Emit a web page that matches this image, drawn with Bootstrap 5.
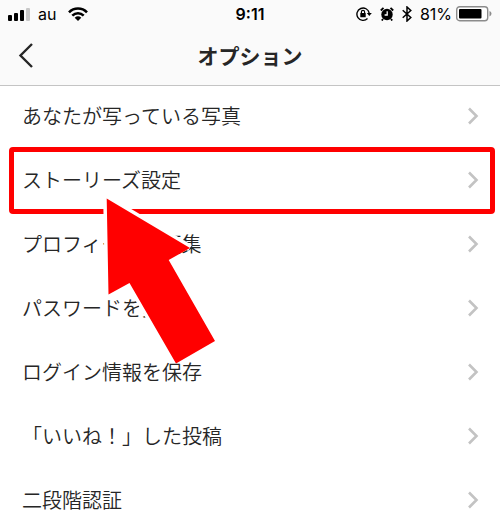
<!DOCTYPE html>
<html lang="ja">
<head>
<meta charset="utf-8">
<meta name="viewport" content="width=device-width, initial-scale=1">
<title>オプション</title>
<link href="https://cdn.jsdelivr.net/npm/bootstrap@5.3.0/dist/css/bootstrap.min.css" rel="stylesheet">
<style>
  body { font-family: "Noto Sans CJK JP", sans-serif; color: #262626; background: #fff; }
  .top-area { background: #fafafa; border-bottom: 1px solid #c4c4c4; }
  .status-bar { height: 28px; padding: 0 8px; font: 16px/28px Inter, sans-serif; color: #000; }
  .status-side { flex: 1 1 0; }
  .clock { font-weight: 600; }
  .title-bar { height: 57px; padding: 0 16px 4px; }
  .title-side { flex: 1 1 0; }
  .page-title { font-size: 21px; line-height: 28px; font-weight: 700; }
  .option-row { height: 64px; padding: 16px 20px 20px 22px; font-size: 20px; line-height: 28px; font-weight: 350; color: #262626; background: none; }
  .marked::before { content: ""; position: absolute; inset: -3px 5px 0 9px; border: 5px solid #f00; border-radius: 4px; pointer-events: none; }
  .pointer-arrow { position: absolute; left: 100px; top: 40px; z-index: 2; pointer-events: none; }
  svg { display: block; flex: none; }
</style>
<script src="https://cdn.jsdelivr.net/npm/bootstrap@5.3.0/dist/js/bootstrap.bundle.min.js"></script>
</head>
<body>
<div class="vh-100 overflow-hidden">
  <header class="top-area">
    <div class="status-bar d-flex align-items-center">
      <div class="status-side d-flex align-items-center">
        <svg width="22" height="14" viewBox="0 0 22 14" aria-hidden="true">
          <rect x="0" y="8" width="4" height="6" rx="1"/><rect x="6" y="6" width="4" height="8" rx="1"/><rect x="12" y="3" width="4" height="11" rx="1"/><rect x="18" y="1" width="4" height="13" rx="1" fill="#c8c8c8"/>
        </svg>
        <span class="ms-2 me-2 pe-1">au</span>
        <svg width="20" height="14" viewBox="0 0 20 14" fill="none" stroke="#000" stroke-width="2.600" aria-hidden="true">
          <path d="M1 5.300C6 .3 14 .3 19 5.300"/><path d="M4.300 8.600C7.600 5.400 12.400 5.400 15.700 8.600"/><path d="M10 14 6.700 10.700Q10 8 13.300 10.700Z" fill="#000" stroke="none"/>
        </svg>
      </div>
      <span class="clock">9:11</span>
      <div class="status-side d-flex align-items-center justify-content-end">
        <svg width="16" height="16" viewBox="0 0 16 16" fill="none" stroke="#000" stroke-width="1.400" aria-hidden="true">
          <path d="M11.500 12.600A6.200 6.200 0 1 1 13.200 7"/><path d="M10.800 7H15.800L13.300 10Z" fill="#000" stroke="none"/><rect x="4.300" y="7" width="5.400" height="4.200" rx=".5" fill="#000" stroke="none"/><path d="M5.400 7.500V6a1.600 1.600 0 0 1 3.200 0v1.500" stroke-width="1.200"/>
        </svg>
        <svg class="ms-2" width="14" height="14" viewBox="0 0 14 14" aria-hidden="true">
          <circle cx="7" cy="7.500" r="5.700"/><path d="M.8 3.500 3.500.9M13.200 3.500 10.500.9M3 12 1.800 13.500M11 12l1.200 1.500" stroke="#000" stroke-width="1.800"/><path d="M7.200 4.200V8H4.600" fill="none" stroke="#fff" stroke-width="1.300"/>
        </svg>
        <svg class="ms-2" width="10" height="16" viewBox="0 0 10 16" fill="none" stroke="#000" stroke-width="1.500" aria-hidden="true">
          <path d="M.7 4.300 8.800 11.500 5 15V1L8.800 4.500.7 11.700"/>
        </svg>
        <span class="ms-2">81%</span>
        <svg class="ms-1" width="36" height="16" viewBox="0 0 36 16" aria-hidden="true">
          <rect x=".7" y=".7" width="31" height="14" rx="3" fill="#fff" stroke="#8c8c8c" stroke-width="1.400"/><rect x="3" y="3" width="22.500" height="9.500" rx="1"/><path d="M33.500 5v5.500Q35.500 9.500 35.500 7.700T33.500 5Z" fill="#8c8c8c"/>
        </svg>
      </div>
    </div>
    <div class="title-bar d-flex align-items-center">
      <div class="title-side">
        <button type="button" class="btn border-0 p-0" aria-label="戻る">
          <svg width="20" height="26" viewBox="0 0 20 26" fill="none" stroke="#262626" stroke-width="2.400"><path d="M16 2 4.500 13.500 16 25"/></svg>
        </button>
      </div>
      <h1 class="page-title m-0">オプション</h1>
      <div class="title-side"></div>
    </div>
  </header>
  <nav aria-label="オプション">
    <a href="#" class="option-row d-flex align-items-center justify-content-between text-decoration-none">あなたが写っている写真<svg width="14" height="18" viewBox="0 0 14 18" fill="none" stroke="#c3c3c3" stroke-width="2.600"><path d="M3 1.500 10.500 9 3 16.500"/></svg></a>
    <div class="marked position-relative">
      <a href="#" class="option-row d-flex align-items-center justify-content-between text-decoration-none">ストーリーズ設定<svg width="14" height="18" viewBox="0 0 14 18" fill="none" stroke="#c3c3c3" stroke-width="2.600"><path d="M3 1.500 10.500 9 3 16.500"/></svg></a>
      <svg class="pointer-arrow" width="120" height="180" viewBox="0 0 120 180" aria-hidden="true">
        <path d="M8.500 104.500 6.700 8.500 90 58M29.500 93 65 154" fill="none" stroke="#fff" stroke-width="7"/>
        <path d="M6.700 8.500 90 58 68.700 70 115 151 76 173.500 29.500 93 8.500 104.500Z" fill="#f00"/>
      </svg>
    </div>
    <a href="#" class="option-row d-flex align-items-center justify-content-between text-decoration-none">プロフィールを編集<svg width="14" height="18" viewBox="0 0 14 18" fill="none" stroke="#c3c3c3" stroke-width="2.600"><path d="M3 1.500 10.500 9 3 16.500"/></svg></a>
    <a href="#" class="option-row d-flex align-items-center justify-content-between text-decoration-none">パスワードを変更<svg width="14" height="18" viewBox="0 0 14 18" fill="none" stroke="#c3c3c3" stroke-width="2.600"><path d="M3 1.500 10.500 9 3 16.500"/></svg></a>
    <a href="#" class="option-row d-flex align-items-center justify-content-between text-decoration-none">ログイン情報を保存<svg width="14" height="18" viewBox="0 0 14 18" fill="none" stroke="#c3c3c3" stroke-width="2.600"><path d="M3 1.500 10.500 9 3 16.500"/></svg></a>
    <a href="#" class="option-row d-flex align-items-center justify-content-between text-decoration-none">「いいね！」した投稿<svg width="14" height="18" viewBox="0 0 14 18" fill="none" stroke="#c3c3c3" stroke-width="2.600"><path d="M3 1.500 10.500 9 3 16.500"/></svg></a>
    <a href="#" class="option-row d-flex align-items-center justify-content-between text-decoration-none">二段階認証<svg width="14" height="18" viewBox="0 0 14 18" fill="none" stroke="#c3c3c3" stroke-width="2.600"><path d="M3 1.500 10.500 9 3 16.500"/></svg></a>
  </nav>
</div>
</body>
</html>
